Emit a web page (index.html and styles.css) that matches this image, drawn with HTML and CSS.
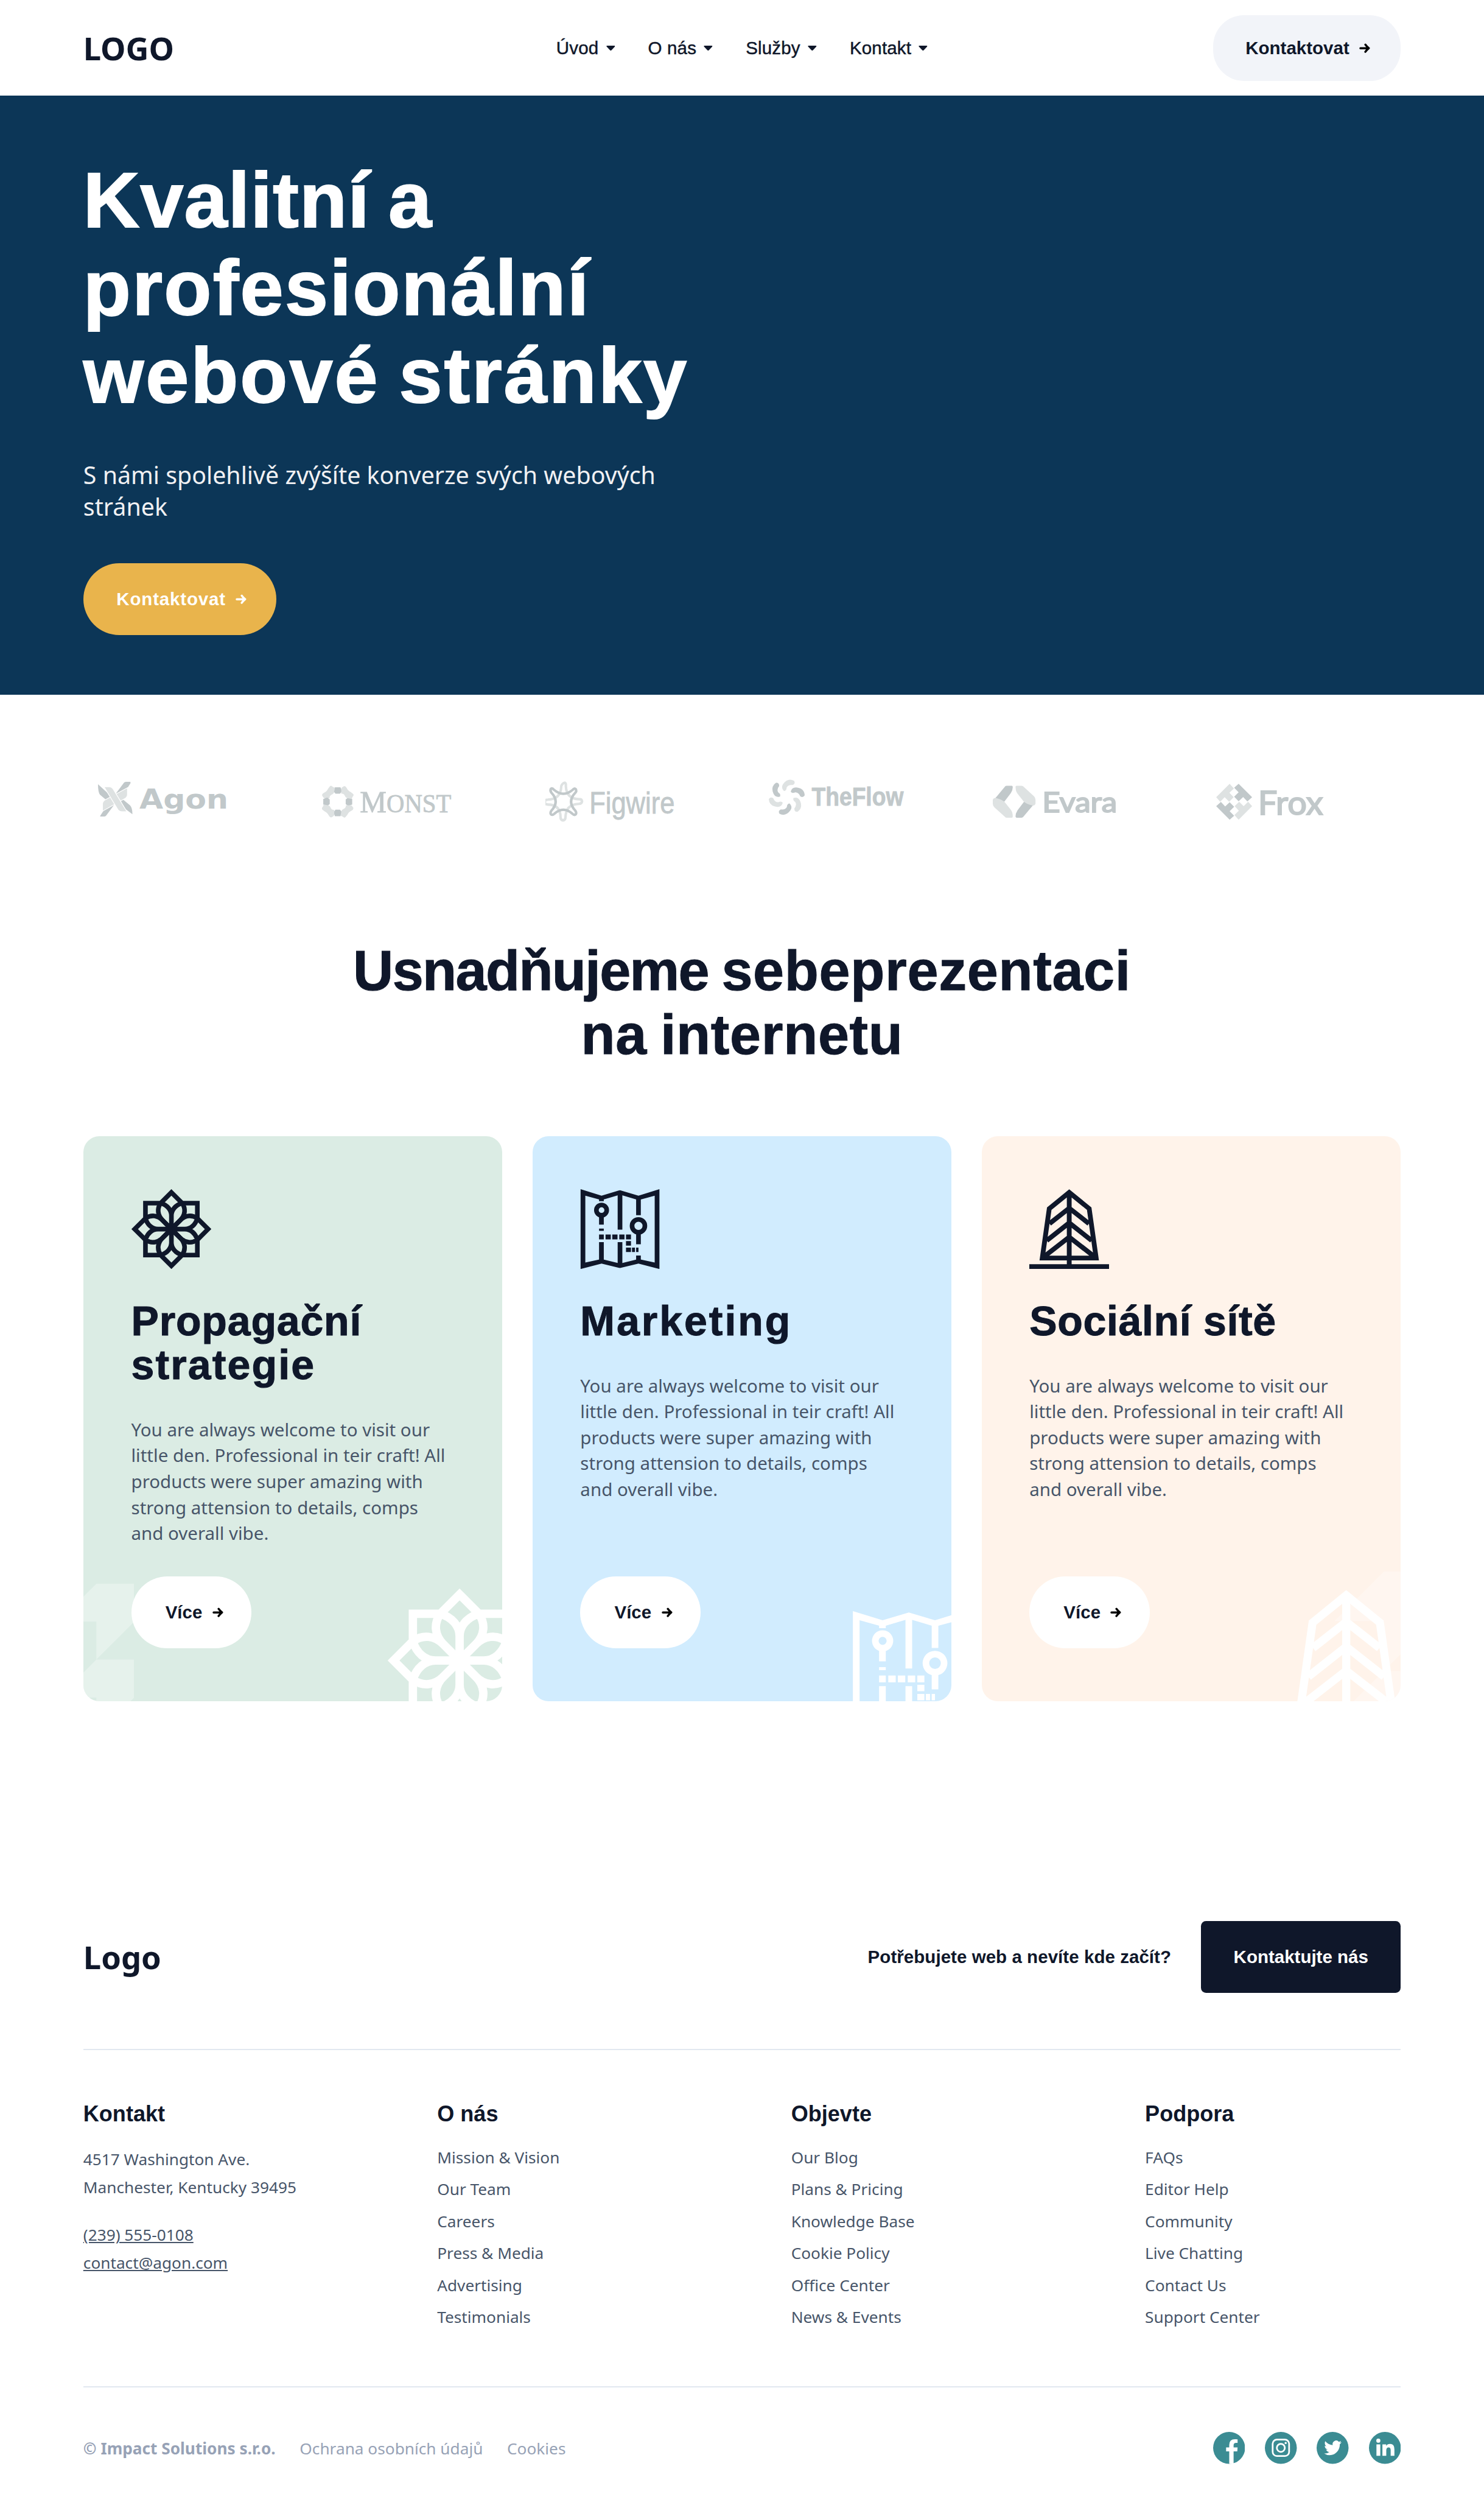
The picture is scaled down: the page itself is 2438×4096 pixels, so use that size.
FILE: index.html
```html
<!DOCTYPE html>
<html lang="cs">
<head>
<meta charset="utf-8">
<title>Kvalitní a profesionální webové stránky</title>
<link rel="stylesheet" href="styles.css">
</head>
<body>
<svg class="sprite" aria-hidden="true">
  <symbol id="arrow" viewBox="0 0 11 10"><path d="M1.2 5H9M6.2 1.4Q7.8 3.6 9.6 5Q7.8 6.4 6.2 8.6" fill="none" stroke="currentColor" stroke-width="2.1" stroke-linecap="round" stroke-linejoin="round"/></symbol>
  <symbol id="caret" viewBox="0 0 9 5"><path d="M1 0H8Q9.300 0 8.500 1L5.200 4.600Q4.500 5.200 3.800 4.600L.5 1Q-.3 0 1 0Z" fill="currentColor"/></symbol>
  <symbol id="flower" viewBox="-80 -80 160 160">
    <g fill="none" stroke="currentColor" stroke-width="9.300">
      <path stroke-miterlimit="6" d="M0-73.500L21.500-52H52V-21.500L73.500 0 52 21.500V52H21.500L0 73.500-21.500 52H-52V21.500L-73.500 0-52-21.500V-52H-21.500Z"/>
      <g id="petals">
        <path id="petal" d="M0 0V-27C0-38-8-48-21.500-52M0 0L-18-18C-28-28-29-41-21.500-52M0 0V-27C0-38 8-48 21.500-52M0 0L18-18C28-28 29-41 21.500-52"/>
        <use href="#petal" transform="rotate(90)"/>
        <use href="#petal" transform="rotate(180)"/>
        <use href="#petal" transform="rotate(270)"/>
      </g>
    </g>
  </symbol>
  <symbol id="map" viewBox="0 0 160 160">
    <g fill="currentColor" fill-rule="evenodd">
      <path d="M1 0L43 13 80 2 117 13 159 0V160L117 149 80 158 43 149 1 160ZM10.500 13V147L43 140 80 149 117 140 149.500 147V13L117 22 80 11 43 22Z"/>
      <path d="M38 18H47.500V24H38ZM38 55H47.500V71H38ZM38 79H47.500V83.500H38ZM38 106H47.500V144H38ZM75.300 8H84.700V81H75.300ZM75.300 106H84.700V152H75.300ZM112.300 18H121.700V52H112.300ZM112.300 89H121.700V110.500H112.300ZM112.300 133H121.700V144H112.300Z"/>
      <path d="M38 91H47.500V100.500H38ZM51 91H61.500V100.500H51ZM64.500 91H75V100.500H64.500ZM78.500 91H89V100.500H78.500ZM92 91H102V100.500H92ZM92 104H102V113H92ZM92 117H102V126H92ZM104 117H110V126H104ZM112.300 117H117V126H112.300Z"/>
      <path d="M43 27a15 15 0 1 1 0 30 15 15 0 1 1 0-30ZM43 36.300a5.700 5.700 0 1 0 0 11.400 5.700 5.700 0 1 0 0-11.400ZM117 56a17.500 17.500 0 1 1 0 35 17.500 17.500 0 1 1 0-35ZM117 65.300a8.200 8.200 0 1 0 0 16.400 8.200 8.200 0 1 0 0-16.400Z"/>
    </g>
  </symbol>
  <symbol id="tower" viewBox="0 0 160 160">
    <path d="M80 6.500L40 39 26 138H134L120 39ZM80 6V155M40.500 69L80 38 119.500 69M35 103L80 67.500 125 103M26 138L80 96 134 138M0 155H160" fill="none" stroke="currentColor" stroke-width="9.600"/>
  </symbol>
  <symbol id="ribbon" viewBox="0 0 200 400">
    <path d="M100 0H200V100L100 200V100H0ZM100 200H200V300L100 400V300H0Z" fill="#fff" fill-opacity=".3"/>
  </symbol>
</svg>

<header class="header">
  <div class="container header-row">
    <a class="brand">LOGO</a>
    <nav class="nav">
      <a>Úvod<svg class="caret"><use href="#caret"/></svg></a>
      <a>O nás<svg class="caret"><use href="#caret"/></svg></a>
      <a>Služby<svg class="caret"><use href="#caret"/></svg></a>
      <a>Kontakt<svg class="caret"><use href="#caret"/></svg></a>
    </nav>
    <a class="button button-header">Kontaktovat<svg class="arrow"><use href="#arrow"/></svg></a>
  </div>
</header>

<main>
  <section class="hero">
    <div class="container">
      <h1 class="hero-title"><span class="track-s">Kvalitní a</span><br><span class="track-m">profesionální</span><br><span class="track-l">webové stránky</span></h1>
      <p class="hero-text">S námi spolehlivě zvýšíte konverze svých webových<br>stránek</p>
      <a class="button button-hero">Kontaktovat<svg class="arrow"><use href="#arrow"/></svg></a>
    </div>
  </section>

  <section class="container partners">
    <svg class="partner" viewBox="0 0 400 90">
      <path class="tone-dark" d="M52 8Q53 6 56 6H64Q66 6 65 9L45 40 34 32ZM4 75L24 44 34 50 17 73Q16 75.500 13 75.500H5Z"/>
      <path class="tone-dark" d="M0 11L34 42 28 52 4 32Q0 27 0 11ZM69 71L38 48 46 38 64 53Q69 58 69 71Z"/>
      <path class="tone-light cut" d="M59 18V31Q59 36 55 39L9 65V51Q9 46 13 43Z"/>
      <path class="tone-light cut" d="M12 16H22Q27 16 30 20L58 66H48Q43 66 40 62Z"/>
      <text class="partner-name" x="83" y="60" font-family="DejaVu Sans" font-weight="700" font-size="55" textLength="178" lengthAdjust="spacingAndGlyphs">Agon</text>
    </svg>
    <svg class="partner" viewBox="0 0 400 90">
      <g>
        <g id="monst-part">
          <path class="tone-dark" d="M26 17H37L40 25 36 30H27L23 25Z"/>
          <path class="tone-light" d="M16 15Q18 13 20 15 22 17 26 18L24 28Q22 31 19 32 15 34 15 39H5Q3 39 0 33 0 30 4 28 10 25 12 20Z"/>
        </g>
        <use href="#monst-part" transform="rotate(90 31.500 46)"/>
        <use href="#monst-part" transform="rotate(180 31.500 46)"/>
        <use href="#monst-part" transform="rotate(270 31.500 46)"/>
      </g>
      <text class="partner-name partner-name-firm" x="76" y="67" font-family="Liberation Serif" font-size="63" textLength="183" lengthAdjust="spacingAndGlyphs">M<tspan font-size="52">ONST</tspan></text>
    </svg>
    <svg class="partner" viewBox="0 0 400 90">
      <g fill="none" stroke-width="5" stroke-linejoin="round">
        <path stroke="#dee2e2" d="M11 17Q14 16 17 20 36 38 55 20 58 16 62 19 65 23 61 27 43 46 61 65 65 69 62 73 58 76 54 72 36 54 18 72 14 76 10 73 7 69 11 65 29 46 11 27 8 21 11 17Z" transform="rotate(45 36 46)"/>
        <path stroke="#c1c8ca" d="M11 20Q14 18 17 22 36 38 55 22 58 18 61 21 63 25 60 28 43 46 60 64 63 68 61 71 58 74 54 70 36 54 18 70 14 74 11 71 9 68 12 64 29 46 12 28 9 24 11 20Z"/>
      </g>
      <text class="partner-name partner-name-firm" x="88" y="69" font-family="Liberation Sans" font-size="62" textLength="171" lengthAdjust="spacingAndGlyphs">Figwire</text>
    </svg>
    <svg class="partner" viewBox="0 0 400 90">
      <path id="blade" class="tone-dark" d="M44 26Q46 17 55 17.500 71 19 72 33 69 39 63 35 60 27 53 27 47 30 44 26Z"/>
      <path id="blade-light" class="tone-light" d="M44 26Q46 17 55 17.500 71 19 72 33 69 39 63 35 60 27 53 27 47 30 44 26Z" transform="rotate(60 36 37)"/>
      <use href="#blade" transform="rotate(120 36 37)"/>
      <use href="#blade-light" transform="rotate(120 36 37)"/>
      <use href="#blade" transform="rotate(240 36 37)"/>
      <use href="#blade-light" transform="rotate(240 36 37)"/>
      <text class="partner-name partner-name-firm" x="86" y="54" font-family="Liberation Sans" font-weight="700" font-size="51" textLength="184" lengthAdjust="spacingAndGlyphs">TheFlow</text>
    </svg>
    <svg class="partner" viewBox="0 0 400 90">
      <path class="tone-dark" d="M25 15Q26 14 28 14H38Q40 14 40 17 40 23 36 29L23 46 5 39Z"/>
      <path class="tone-light" d="M0 42Q2 37 8 39 19 42 24 47L36 62Q40 67 40 76 40 78 38 78H28Q25 78 24 76L3 57Q0 54 0 50Z"/>
      <path class="tone-dark" d="M25 15Q26 14 28 14H38Q40 14 40 17 40 23 36 29L23 46 5 39Z" transform="rotate(180 42.800 46)"/>
      <path class="tone-light" d="M0 42Q2 37 8 39 19 42 24 47L36 62Q40 67 40 76 40 78 38 78H28Q25 78 24 76L3 57Q0 54 0 50Z" transform="rotate(180 42.800 46)"/>
      <text class="partner-name partner-name-heavy" x="99" y="67" font-family="Lato" font-size="56" textLength="150" lengthAdjust="spacingAndGlyphs">Evara</text>
    </svg>
    <svg class="partner" viewBox="0 0 400 90">
      <path id="frox-l" class="tone-light" d="M27 10L0 37 8 46 17 37 26 46 35 37 26.500 28 35.500 19.500Z"/>
      <path id="frox-d" class="tone-dark" d="M27 10L0 37 8 46 17 37 26 46 35 37 26.500 28 35.500 19.500Z" transform="rotate(90 36 46)"/>
      <use href="#frox-l" transform="rotate(180 36 46)"/>
      <use href="#frox-d" transform="rotate(180 36 46)"/>
      <text class="partner-name partner-name-heavy" x="84" y="72" font-family="Lato" font-size="65" textLength="130" lengthAdjust="spacingAndGlyphs">Frox</text>
    </svg>
  </section>

  <section class="container services">
    <h2 class="services-title"><span class="track-tight">Usnadňujeme</span> <span class="track-open">sebeprezentaci</span><br><span class="track-open">na internetu</span></h2>
    <div class="cards">
      <article class="card card-green">
        <svg class="ribbon ribbon-left"><use href="#ribbon"/></svg>
        <svg class="ghost ghost-flower"><use href="#flower"/></svg>
        <svg class="card-icon"><use href="#flower"/></svg>
        <h3 class="card-title"><span class="track-s">Propagační</span><br><span class="track-m">strategie</span></h3>
        <p class="card-text">You are always welcome to visit our<br>little den. Professional in teir craft! All<br>products were super amazing with<br>strong attension to details, comps<br>and overall vibe.</p>
        <a class="button button-card">Více<svg class="arrow"><use href="#arrow"/></svg></a>
      </article>
      <article class="card card-blue">
        <svg class="ghost ghost-map"><use href="#map"/></svg>
        <svg class="card-icon"><use href="#map"/></svg>
        <h3 class="card-title"><span class="track-l">Marketing</span></h3>
        <p class="card-text">You are always welcome to visit our<br>little den. Professional in teir craft! All<br>products were super amazing with<br>strong attension to details, comps<br>and overall vibe.</p>
        <a class="button button-card">Více<svg class="arrow"><use href="#arrow"/></svg></a>
      </article>
      <article class="card card-peach">
        <svg class="ribbon ribbon-right"><use href="#ribbon"/></svg>
        <svg class="ghost ghost-tower"><use href="#tower"/></svg>
        <svg class="card-icon"><use href="#tower"/></svg>
        <h3 class="card-title"><span class="track-open">Sociální sítě</span></h3>
        <p class="card-text">You are always welcome to visit our<br>little den. Professional in teir craft! All<br>products were super amazing with<br>strong attension to details, comps<br>and overall vibe.</p>
        <a class="button button-card">Více<svg class="arrow"><use href="#arrow"/></svg></a>
      </article>
    </div>
  </section>
</main>

<footer class="container footer">
  <div class="footer-top">
    <a class="brand">Logo</a>
    <div class="footer-cta">
      <span class="footer-question">Potřebujete web a nevíte kde začít?</span>
      <a class="button button-dark">Kontaktujte nás</a>
    </div>
  </div>
  <div class="footer-columns">
    <div>
      <h4 class="footer-heading">Kontakt</h4>
      <address class="address">
        <p>4517 Washington Ave.<br>Manchester, Kentucky 39495</p>
        <p class="address-links"><a>(239) 555-0108</a><br><a>contact@agon.com</a></p>
      </address>
    </div>
    <div>
      <h4 class="footer-heading">O nás</h4>
      <ul class="links"><li>Mission &amp; Vision</li><li>Our Team</li><li>Careers</li><li>Press &amp; Media</li><li>Advertising</li><li>Testimonials</li></ul>
    </div>
    <div>
      <h4 class="footer-heading">Objevte</h4>
      <ul class="links"><li>Our Blog</li><li>Plans &amp; Pricing</li><li>Knowledge Base</li><li>Cookie Policy</li><li>Office Center</li><li>News &amp; Events</li></ul>
    </div>
    <div>
      <h4 class="footer-heading">Podpora</h4>
      <ul class="links"><li>FAQs</li><li>Editor Help</li><li>Community</li><li>Live Chatting</li><li>Contact Us</li><li>Support Center</li></ul>
    </div>
  </div>
  <div class="footer-bottom">
    <div class="legal"><strong>© Impact Solutions s.r.o.</strong><a>Ochrana osobních údajů</a><a>Cookies</a></div>
    <div class="social">
      <svg viewBox="0 0 64 64"><circle cx="32" cy="32" r="32"/><path d="M49 15V22H46Q41 22 41 27V31H49L48.400 39H41V64H32.300V39H26V31H32.300V26Q32.300 14.600 44 14.600Z" fill="#fff"/></svg>
      <svg viewBox="0 0 64 64"><circle cx="32" cy="32" r="32"/><g fill="none" stroke="#fff" stroke-width="3.400"><rect x="15.600" y="15.400" width="33" height="33" rx="8.500"/><circle cx="32" cy="32" r="8"/></g><circle cx="41.700" cy="22.200" r="2.200" fill="#fff"/></svg>
      <svg viewBox="0 0 64 64"><circle cx="32" cy="32" r="32"/><path transform="translate(15 14) scale(1.460 1.500)" fill="#fff" d="M23.953 4.570a10 10 0 01-2.825.775 4.958 4.958 0 002.163-2.723c-.951.555-2.005.959-3.127 1.184a4.920 4.920 0 00-8.384 4.482C7.690 8.095 4.067 6.130 1.640 3.162a4.822 4.822 0 00-.666 2.475c0 1.710.87 3.213 2.188 4.096a4.904 4.904 0 01-2.228-.616v.06a4.923 4.923 0 003.946 4.827 4.996 4.996 0 01-2.212.085 4.936 4.936 0 004.604 3.417 9.867 9.867 0 01-6.102 2.105c-.39 0-.779-.023-1.170-.067a13.995 13.995 0 007.557 2.209c9.053 0 13.998-7.496 13.998-13.985 0-.21 0-.42-.015-.63A9.935 9.935 0 0024 4.590z"/></svg>
      <svg viewBox="0 0 64 64"><circle cx="32" cy="32" r="32"/><g fill="#fff"><circle cx="18.800" cy="17.600" r="4.100"/><path d="M15 25H22.700V48H15ZM27 25H34.500V28Q37 24 42 24 51 24 51 35V48H43.500V36.500Q43.500 31 39.500 31 34.700 31 34.700 37V48H27Z"/></g></svg>
    </div>
  </div>
</footer>
</body>
</html>
```
FILE: styles.css
```css
/* 1rem equals ten design pixels */
html {
  font-size: 16.397px;
}

* {
  box-sizing: border-box;
  margin: 0;
  padding: 0;
}

body {
  font-family: "Noto Sans", sans-serif;
  font-size: 1.6rem;
  color: #0f172a;
  background: #fff;
}

svg {
  display: block;
  flex: none;
}

.sprite {
  position: absolute;
  width: 0;
  height: 0;
}

.container {
  width: 132rem;
  margin: 0 auto;
}

.brand {
  font-size: 3.2rem;
  font-weight: 700;
  line-height: 4.4rem;
}

/* Buttons */
.button {
  display: flex;
  align-items: center;
  justify-content: center;
  width: max-content;
  height: 7.2rem;
  border-radius: 3.6rem;
  font-family: "Liberation Sans", sans-serif;
  font-size: 1.8rem;
  font-weight: 700;
  white-space: nowrap;
}

.arrow {
  width: 1.1rem;
  height: 1rem;
  margin-left: 1rem;
}

.button-header {
  justify-self: end;
  width: 18.8rem;
  height: 6.6rem;
  padding-left: 0.2rem;
  border-radius: 3.1rem;
  background: #f2f4f9;
}

.button-header .arrow,
.button-card .arrow {
  color: #000;
}

.button-hero {
  width: 19.35rem;
  padding-left: 0.35rem;
  letter-spacing: 0.05rem;
  background: #e9b44c;
  color: #fff;
}

.button-card {
  position: relative;
  width: 12.05rem;
  margin-top: auto;
  padding-left: 0.6rem;
  background: #fff;
}

.button-dark {
  width: 20rem;
  border-radius: 0.5rem;
  background: #0f172a;
  color: #fff;
}

/* Header */
.header-row {
  display: grid;
  grid-template-columns: 1fr auto 1fr;
  align-items: center;
  height: 9.6rem;
}

.nav {
  display: flex;
  gap: 3.3rem;
  font-family: "Liberation Sans", sans-serif;
  font-size: 1.8rem;
  letter-spacing: 0.01rem;
  -webkit-text-stroke: 0.03rem #0f172a;
}

.nav a {
  display: flex;
  align-items: center;
  gap: 0.75rem;
}

.caret {
  width: 0.9rem;
  height: 0.5rem;
}

/* Hero */
.hero {
  height: 60rem;
  padding-top: 6.05rem;
  background: #0c3657;
  color: #fff;
}

.hero-title {
  font-family: "Liberation Sans", sans-serif;
  font-size: 7.8rem;
  line-height: 8.8rem;
  word-spacing: -0.4rem;
  -webkit-text-stroke: 0.12rem #fff;
}

.hero-title .track-s {
  letter-spacing: 0.07rem;
}

.hero-title .track-m {
  letter-spacing: 0.14rem;
}

.hero-title .track-l {
  letter-spacing: 0.18rem;
}

.hero-text {
  margin: 3.93rem 0 4.02rem;
  font-size: 2.4rem;
  line-height: 3.2rem;
  color: #f1f1f3;
}

/* Partner logos */
.partners {
  display: grid;
  grid-template-columns: repeat(6, 22.4rem);
  padding: 8.4rem 0 0 1.5rem;
  overflow: hidden;
}

.partner {
  width: 20rem;
  height: 4.5rem;
}

.partner-name,
.tone-dark {
  fill: #c1c8ca;
}

.partner-name-firm {
  stroke: #c1c8ca;
  stroke-width: 1;
}

.partner-name-heavy {
  stroke: #c1c8ca;
  stroke-width: 2.4;
}

.tone-light {
  fill: #dee2e2;
}

.cut {
  stroke: #fff;
  stroke-width: 1.5;
}

/* Services */
.services-title {
  margin: 11.53rem 0 6.97rem;
  font-family: "Liberation Sans", sans-serif;
  font-size: 5.6rem;
  line-height: 6.4rem;
  text-align: center;
  word-spacing: -0.25rem;
  -webkit-text-stroke: 0.06rem #0f172a;
}

.track-tight {
  letter-spacing: -0.1rem;
}

.track-open {
  letter-spacing: 0.04rem;
}

.cards {
  display: grid;
  grid-template-columns: repeat(3, 1fr);
  gap: 3rem;
}

.card {
  position: relative;
  display: flex;
  flex-direction: column;
  height: 56.6rem;
  padding: 5.3rem 4.8rem;
  border-radius: 1.6rem;
  overflow: hidden;
}

.card-green {
  background: #dbece4;
}

.card-blue {
  background: #d1ecfe;
}

.card-peach {
  background: #fff3ea;
}

.card-icon {
  width: 8rem;
  height: 8rem;
}

.card-title {
  margin-top: 3rem;
  font-family: "Liberation Sans", sans-serif;
  font-size: 4.15rem;
  line-height: 4.4rem;
  -webkit-text-stroke: 0.06rem #0f172a;
}

.card-title .track-s {
  letter-spacing: 0.05rem;
}

.card-title .track-m {
  letter-spacing: 0.13rem;
}

.card-title .track-l {
  letter-spacing: 0.18rem;
}

.card-text {
  margin-top: 3rem;
  font-size: 1.8rem;
  line-height: 2.6rem;
  color: #475569;
  white-space: nowrap;
}

.ghost,
.ribbon {
  position: absolute;
  color: #fff;
}

.ghost-flower {
  left: 30.5rem;
  top: 45.3rem;
  width: 14.4rem;
  height: 14.4rem;
}

.ghost-map {
  left: 32.03rem;
  top: 47.6rem;
  width: 11.35rem;
  height: 11.35rem;
}

.ghost-tower {
  left: 29.8rem;
  top: 45.45rem;
  width: 13.5rem;
  height: 13.5rem;
}

.ribbon-left {
  left: -2.5rem;
  top: 44.8rem;
  width: 7.6rem;
  height: 15.2rem;
}

.ribbon-right {
  left: 35.35rem;
  top: 43.6rem;
  width: 9.95rem;
  height: 19.9rem;
}

/* Footer */
.footer {
  padding-top: 22rem;
}

.footer-top {
  display: flex;
  align-items: center;
  justify-content: space-between;
  padding-bottom: 5.6rem;
  border-bottom: 2px solid #e2e8f0;
}

.footer-cta {
  display: flex;
  align-items: center;
  gap: 3rem;
}

.footer-question {
  font-family: "Liberation Sans", sans-serif;
  font-size: 1.8rem;
  font-weight: 700;
  letter-spacing: 0.003rem;
}

.footer-columns {
  display: grid;
  grid-template-columns: repeat(3, 35.46rem) 1fr;
  padding: 4.88rem 0 5.3rem;
  border-bottom: 2px solid #e2e8f0;
  color: #475569;
}

.footer-heading {
  font-family: "Liberation Sans", sans-serif;
  font-size: 2.2rem;
  line-height: 3rem;
  color: #0f172a;
}

.address {
  margin-top: 1.71rem;
  font-style: normal;
  line-height: 2.8rem;
}

.address-links {
  margin-top: 2rem;
  text-decoration: underline;
}

.links {
  margin-top: 1.29rem;
  line-height: 3.2rem;
  list-style: none;
}

.footer-bottom {
  display: flex;
  align-items: center;
  justify-content: space-between;
  padding: 4.5rem 0 2.9rem;
}

.legal {
  display: flex;
  gap: 2.42rem;
  color: #97a2b6;
}

.social {
  display: flex;
  gap: 2rem;
}

.social svg {
  width: 3.2rem;
  height: 3.2rem;
  fill: #3b8c93;
}
```
